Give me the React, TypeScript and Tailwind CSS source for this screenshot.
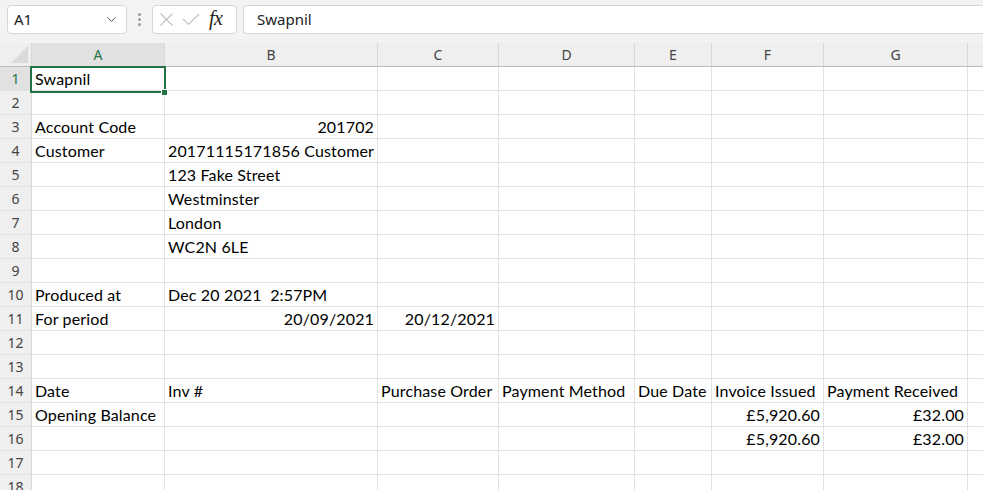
import { ChevronDown } from "lucide-react";

const cols = [
  { key: "A", w: "w-[133px]" },
  { key: "B", w: "w-[213px]" },
  { key: "C", w: "w-[121px]" },
  { key: "D", w: "w-[136px]" },
  { key: "E", w: "w-[77px]" },
  { key: "F", w: "w-[112px]" },
  { key: "G", w: "w-[144px]" },
];

type Cell = { t: string; r?: boolean };
type Row = Record<string, Cell>;

const rows: Row[] = [
  { A: { t: "Swapnil" } },
  {},
  { A: { t: "Account Code" }, B: { t: "201702", r: true } },
  { A: { t: "Customer" }, B: { t: "20171115171856 Customer" } },
  { B: { t: "123 Fake Street" } },
  { B: { t: "Westminster" } },
  { B: { t: "London" } },
  { B: { t: "WC2N 6LE" } },
  {},
  { A: { t: "Produced at" }, B: { t: "Dec 20 2021  2:57PM" } },
  { A: { t: "For period" }, B: { t: "20/09/2021", r: true }, C: { t: "20/12/2021", r: true } },
  {},
  {},
  {
    A: { t: "Date" },
    B: { t: "Inv #" },
    C: { t: "Purchase Order" },
    D: { t: "Payment Method" },
    E: { t: "Due Date" },
    F: { t: "Invoice Issued" },
    G: { t: "Payment Received" },
  },
  { A: { t: "Opening Balance" }, F: { t: "£5,920.60", r: true }, G: { t: "£32.00", r: true } },
  { F: { t: "£5,920.60", r: true }, G: { t: "£32.00", r: true } },
  {},
  {},
];

export default function App() {
  return (
    <div className="w-[983px] h-[490px] overflow-hidden bg-white font-['Lato',sans-serif]">
      {/* Formula bar */}
      <div className="h-[43px] bg-[#f3f3f3] flex items-start pt-[5px] pl-[7px]">
        <div className="w-[120px] h-[29px] bg-white border border-[#d6d6d6] rounded-[4px] flex items-center justify-between pl-[6px] pr-[7px]">
          <span className="text-[15px] text-[#222] font-['Noto_Sans',sans-serif]">A1</span>
          <ChevronDown className="w-[15px] h-[15px] text-[#444]" strokeWidth={1.5} />
        </div>
        <div className="w-[25px] h-[29px] flex flex-col items-center justify-center gap-[2px]">
          <span className="w-[3px] h-[3px] bg-[#9a9a9a] rounded-full" />
          <span className="w-[3px] h-[3px] bg-[#9a9a9a] rounded-full" />
          <span className="w-[3px] h-[3px] bg-[#9a9a9a] rounded-full" />
        </div>
        <div className="w-[85px] h-[29px] bg-white border border-[#d6d6d6] rounded-[4px] flex items-center pl-[7px] gap-[9px]">
          <svg width="13" height="13" viewBox="0 0 13 13" className="text-[#c2c2c2]">
            <path d="M0.5 0.5 L12.5 12.5 M12.5 0.5 L0.5 12.5" stroke="currentColor" strokeWidth="1.2" fill="none" />
          </svg>
          <svg width="18" height="13" viewBox="0 0 18 13" className="text-[#c2c2c2]">
            <path d="M1 6 L6.5 11.5 L17 1" stroke="currentColor" strokeWidth="1.2" fill="none" />
          </svg>
          <span className="text-[20px] italic text-[#222] font-['Liberation_Serif',serif] leading-none -mt-[3px] tracking-[-0.5px]">
            fx
          </span>
        </div>
        <div className="ml-[6px] flex-1 h-[29px] bg-white border border-[#d6d6d6] border-r-0 rounded-l-[4px] flex items-center pl-[13px]">
          <span className="text-[15px] text-[#222] font-['Noto_Sans',sans-serif]">Swapnil</span>
        </div>
      </div>

      {/* Grid */}
      <div className="relative">
        {/* Column headers */}
        <div className="flex h-[24px] bg-[#efefef] border-b border-[#bcbcbc] font-['Noto_Sans',sans-serif] text-[14px] text-[#444]">
          <div className="w-[32px] shrink-0 border-r border-[#d8d8d8] relative">
            <svg width="17" height="17" viewBox="0 0 17 17" className="absolute right-[3px] bottom-[3px]">
              <path d="M17 0 L17 17 L0 17 Z" fill="#dadada" />
            </svg>
          </div>
          {cols.map((c) => (
            <div
              key={c.key}
              className={`${c.w} shrink-0 flex items-center justify-center border-r border-[#d8d8d8] ${
                c.key === "A" ? "bg-[#e1e1e1] text-[#217346]" : ""
              }`}
            >
              {c.key}
            </div>
          ))}
          <div className="flex-1" />
        </div>

        {rows.map((row, i) => (
          <div key={i} className="flex h-[24px] border-b border-[#e1e1e1]">
            <div
              className={`w-[32px] shrink-0 border-r border-[#d8d8d8] flex items-center justify-center text-[14px] font-['Noto_Sans',sans-serif] ${
                i === 0 ? "bg-[#e1e1e1] text-[#217346]" : "bg-[#efefef] text-[#444]"
              }`}
            >
              {i + 1}
            </div>
            {cols.map((c) => {
              const cell = row[c.key];
              return (
                <div
                  key={c.key}
                  className={`${c.w} shrink-0 border-r border-[#e1e1e1] flex items-end px-[3px] text-[16px] leading-[22px] tracking-[0.15px] text-black whitespace-pre overflow-hidden ${
                    cell?.r ? "justify-end" : "justify-start"
                  }`}
                >
                  {cell?.t}
                </div>
              );
            })}
            <div className="flex-1" />
          </div>
        ))}

        {/* Active cell selection */}
        <div className="absolute left-[30px] top-[23px] w-[136px] h-[27px] border-2 border-[#217346] pointer-events-none" />
        <div className="absolute left-[161px] top-[46px] w-[7px] h-[7px] bg-[#217346] border border-white" />
      </div>
    </div>
  );
}
